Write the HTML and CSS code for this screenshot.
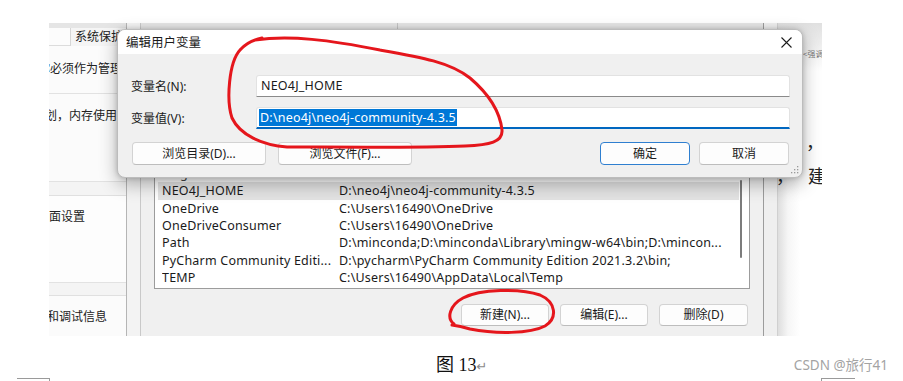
FILE: index.html
```html
<!DOCTYPE html>
<html lang="zh-CN">
<head>
<meta charset="utf-8">
<title>编辑用户变量</title>
<link rel="stylesheet" href="styles.css">
</head>
<body>
<div class="page">
  <div class="shot">
    <div class="sys-panel">
      <div class="tabs"><span class="tab-blank"></span><span class="tab">系统保护</span></div>
      <div class="blk blk1"><span class="cut c11">你必须作为管理</span></div>
      <div class="blk blk2"><span class="cut c16">计划，内存使用</span></div>
      <div class="band"></div>
      <div class="blk blk3"><span class="cut c12">桌面设置</span></div>
      <div class="band band2"></div>
      <div class="blk blk4"><span class="cut c14">障和调试信息</span></div>
    </div>
    <div class="gutter"></div>
    <div class="env-window">
      <div class="env-top"><span class="env-tabline"></span></div>
      <div class="listbox">
        <div class="list-rows">
          <div class="row"></div>
          <div class="row"><span class="c1 hid">g</span></div>
          <div class="row selected"><span class="c1">NEO4J_HOME</span><span class="c2">D:\neo4j\neo4j-community-4.3.5</span></div>
          <div class="row"><span class="c1">OneDrive</span><span class="c2">C:\Users\16490\OneDrive</span></div>
          <div class="row"><span class="c1">OneDriveConsumer</span><span class="c2">C:\Users\16490\OneDrive</span></div>
          <div class="row"><span class="c1">Path</span><span class="c2">D:\minconda;D:\minconda\Library\mingw-w64\bin;D:\mincon...</span></div>
          <div class="row"><span class="c1">PyCharm Community Editi...</span><span class="c2">D:\pycharm\PyCharm Community Edition 2021.3.2\bin;</span></div>
          <div class="row"><span class="c1">TEMP</span><span class="c2">C:\Users\16490\AppData\Local\Temp</span></div>
        </div>
        <div class="scroll"><div class="thumb"></div></div>
      </div>
      <div class="env-buttons">
        <button class="btn b-new">新建(N)...</button>
        <button class="btn b-edit">编辑(E)...</button>
        <button class="btn b-del">删除(D)</button>
      </div>
    </div>
    <div class="frame"></div>
    <div class="doc">
      <div class="doc-tag">&lt;强调</div>
      <div class="doc-line1">，</div>
      <div class="doc-line2"><span>，</span><span>建</span></div>
    </div>
  </div>

  <div class="dialog">
    <div class="dlg-title">
      <span class="dlg-caption">编辑用户变量</span>
      <svg class="dlg-close" width="11" height="11" viewBox="0 0 11 11"><path d="M0.5 0.5 L10.5 10.5 M10.5 0.5 L0.5 10.5" stroke="#1c1c1c" stroke-width="1.1" fill="none"/></svg>
    </div>
    <div class="dlg-body">
      <div class="form">
        <label class="lbl">变量名(N):</label>
        <div class="field f-name">NEO4J_HOME</div>
        <label class="lbl">变量值(V):</label>
        <div class="field f-value"><span class="sel">D:\neo4j\neo4j-community-4.3.5</span></div>
      </div>
      <div class="dlg-buttons">
        <button class="btn wide">浏览目录(D)...</button>
        <button class="btn wide">浏览文件(F)...</button>
        <span class="spacer"></span>
        <button class="btn mid primary">确定</button>
        <button class="btn mid">取消</button>
      </div>
    </div>
    <svg class="grip" width="8" height="8" viewBox="0 0 8 8"><g fill="#9a9a9a"><rect x="6" y="0" width="1.3" height="1.3"/><rect x="3" y="3" width="1.3" height="1.3"/><rect x="6" y="3" width="1.3" height="1.3"/><rect x="0" y="6" width="1.3" height="1.3"/><rect x="3" y="6" width="1.3" height="1.3"/><rect x="6" y="6" width="1.3" height="1.3"/></g></svg>
  </div>

  <svg class="ink" width="903" height="381" viewBox="0 0 903 381">
    <path d="M255 40 C290 35 330 40 380 50 C420 57 450 62 470 78 C490 95 500 112 502 130 C503 142 490 145 465 146 C420 148 330 147 287 147 C262 145 240 135 232 118 C226 100 229 62 240 50 C246 43 252 40 262 38" fill="none" stroke="#e5161c" stroke-width="3" stroke-linecap="round" stroke-linejoin="round"/>
    <path d="M454 324 C446 318 450 305 463 298 C480 289 520 288 540 295 C556 302 558 318 545 326 C530 334 495 334 470 329 C463 327 459 326 452 325" fill="none" stroke="#e5161c" stroke-width="3" stroke-linecap="round" stroke-linejoin="round"/>
  </svg>

  <div class="below">
    <div class="caption"><span class="cap-fig">图 13</span><span class="cap-mark">↵</span></div>
    <div class="wm">CSDN @旅行41</div>
  </div>
  <div class="marks"><span class="mark-l"></span><span class="mark-r"></span></div>
</div>
</body>
</html>
```

FILE: styles.css
```css
* { box-sizing: border-box; }
html, body { margin: 0; padding: 0; background: #fff; }
body {
  width: 903px; height: 381px; overflow: hidden;
  font-family: "Noto Sans", "Noto Sans CJK SC", sans-serif;
  font-size: 12px; color: #1b1b1b;
}
.page { position: relative; width: 903px; height: 381px; padding-top: 23px; }

/* background screenshot */
.shot {
  display: flex; margin-left: 49px; width: 773px; height: 313px;
  background: #f0f0f0; overflow: hidden;
}
.sys-panel {
  width: 78px; flex: none; background: #fbfbfb;
  border-right: 1px solid #b5b5b5; overflow: hidden; white-space: nowrap;
}
.tabs {
  height: 23px; display: flex;
  background: linear-gradient(#e5e5e5 0 5px, #fcfcfc 5px);
}
.tab-blank { width: 21px; border-bottom: 1px solid #dcdcdc; }
.tab {
  flex: 1; margin-top: 5px; padding-left: 4px; line-height: 18px;
  background: #f5f5f5; border-left: 1px solid #d6d6d6; font-size: 12px; color: #222;
}
.blk { border-bottom: 1px solid #e2e2e2; font-size: 12px; color: #222; overflow: hidden; }
.blk1 { height: 48px; line-height: 46px; }
.blk2 { height: 88px; padding-top: 13px; line-height: 18px; }
.blk3 { height: 87px; padding-top: 12px; line-height: 18px; background: #fdfdfd; }
.blk4 { height: 40px; padding-top: 12px; line-height: 18px; border-bottom: 0; }
.band { height: 14px; background: #f4f4f4; border-bottom: 1px solid #e0e0e0; }
.band2 { height: 13px; }
.cut { display: block; }
.c11 { text-indent: -11px; }
.c16 { text-indent: -16px; }
.c12 { text-indent: -12px; }
.c14 { text-indent: -14px; }

.gutter {
  width: 14px; flex: none; background: #f3f3f3;
  border-right: 1px solid #c9c9c9;
}

.env-window {
  width: 622px; flex: none; background: #f0f0f0;
  padding: 0 13px; display: flex; flex-direction: column;
}
.env-top {
  height: 6px; margin: 0 -13px 101px; background: #e6e6e6;
  display: flex; padding-left: 256px;
}
.env-tabline { width: 1px; background: #c4c4c4; }
.listbox {
  height: 159px; background: #fff; border: 1px solid #9c9c9c;
  display: flex; overflow: hidden;
}
.list-rows { flex: 1; padding-top: 16.5px; min-width: 0; }
.row {
  height: 17.4px; line-height: 17.4px; display: flex; white-space: nowrap;
  padding-left: 7px; font-size: 12.5px; letter-spacing: 0.2px; color: #1a1a1a;
}
.row.selected { background: #e3e3e3; margin-left: 3px; padding-left: 4px; }
.c1 { width: 177px; flex: none; overflow: hidden; }
.c2 { overflow: hidden; }
.hid { padding-left: 18px; color: #444; }
.scroll { width: 10px; flex: none; padding-top: 49px; padding-left: 1px; }
.thumb { width: 2px; height: 78px; background: #7c7c7c; border-radius: 1px; }

.env-buttons {
  display: flex; justify-content: flex-end; gap: 11px;
  margin-top: 15px; padding-right: 2px;
}
.btn {
  height: 22px; padding: 0; font: inherit; font-size: 12px; color: #1b1b1b;
  background: #fdfdfd; border: 1px solid #d3d3d3; border-bottom-color: #bdbdbd;
  border-radius: 4px; text-align: center; line-height: 20px;
}
.b-new, .b-edit { width: 88px; }
.b-del { width: 89px; }

.frame {
  width: 15px; flex: none; background: #efefef;
  border-left: 1px solid #9c9c9c; border-right: 1px solid #d0d0d0;
}
.doc {
  width: 44px; flex: none; overflow: hidden; white-space: nowrap;
  background:
    linear-gradient(to bottom, #e0e0e0 0, rgba(255,255,255,0) 48px),
    linear-gradient(to right, #dedede 0, #f6f6f6 10px, #fff 22px);
  font-family: "Liberation Serif", "Noto Sans CJK SC", serif; color: #222;
}
.doc-tag {
  margin-top: 26px; padding-left: 25px; font-size: 8px; line-height: 10px;
  color: #777; font-family: "Noto Sans CJK SC", sans-serif;
}
.doc-line1 { margin-top: 73px; padding-left: 28px; font-size: 18px; line-height: 22px; }
.doc-line2 {
  margin-top: 12px; display: flex; justify-content: space-between;
  font-size: 18px; line-height: 22px; margin-left: -2px; margin-right: -4px;
}

/* dialog on top */
.dialog {
  position: absolute; left: 117px; top: 29px; width: 686px; height: 149px;
  border-radius: 8px; overflow: hidden; z-index: 2;
  background: #f0f0f0; border: 1px solid #bcbcbc;
  box-shadow: 0 6px 18px rgba(0,0,0,0.30), 0 0 5px rgba(0,0,0,0.18);
}
.dlg-title {
  height: 24px; background: #fff; display: flex; align-items: center;
  justify-content: space-between; padding: 0 10px 0 8px;
}
.dlg-caption { font-size: 12.5px; color: #1a1a1a; line-height: 20px; padding-top: 1px; }
.dlg-close { display: block; }
.dlg-body { padding: 21px 12px 0 12px; }
.form {
  display: grid; grid-template-columns: 126px 1fr;
  grid-template-rows: 22px 22px; row-gap: 10px; align-items: center;
}
.lbl { font-size: 12px; color: #1a1a1a; padding-left: 1px; }
.field {
  height: 22px; background: #fff; border: 1px solid #e2e2e2;
  border-bottom: 1px solid #8a8a8a; border-radius: 3px 3px 0 0;
  padding-left: 4px; font-size: 12.5px; letter-spacing: 0.2px; line-height: 20px; color: #1a1a1a;
  white-space: nowrap;
}
.f-value { border-bottom: 2px solid #0067c0; padding-left: 2px; padding-top: 1px; line-height: 17px; }
.sel { background: #0078d7; color: #fff; display: inline-block; padding: 0 1px; }
.dlg-buttons { display: flex; gap: 12px; margin-top: 13px; padding-left: 2px; padding-right: 1px; }
.dlg-buttons .btn { height: 23px; line-height: 21px; }
.wide { width: 134px; }
.mid { width: 90px; }
.spacer { flex: 1; }
.dlg-buttons .mid + .mid { margin-left: -3px; }
.primary { border: 1px solid #2f7fd0; }
.grip { position: absolute; right: 3px; bottom: 3px; }

.ink { position: absolute; left: 0; top: 0; z-index: 3; pointer-events: none; }

.below { height: 42px; display: flex; align-items: flex-start; padding-top: 18px; }
.caption {
  margin-left: 436px; font-family: "Liberation Serif", "Noto Sans CJK SC", serif;
  font-size: 18px; line-height: 22px; color: #111; white-space: nowrap;
}
.cap-mark { font-family: "DejaVu Sans", sans-serif; font-size: 13px; color: #8a8a8a; }
.wm {
  margin-left: auto; margin-right: 15px; margin-top: 2px;
  font-family: "Noto Sans", "Noto Sans CJK SC", sans-serif;
  font-size: 13.5px; line-height: 18px; color: #a3a3a3;
}
.marks { display: flex; justify-content: space-between; padding: 0 48px 0 17px; }
.mark-l { width: 33px; height: 3px; border-top: 1px solid #9a9a9a; border-right: 1px solid #9a9a9a; }
.mark-r { width: 34px; height: 3px; border-top: 1px solid #9a9a9a; border-left: 1px solid #9a9a9a; }
```
